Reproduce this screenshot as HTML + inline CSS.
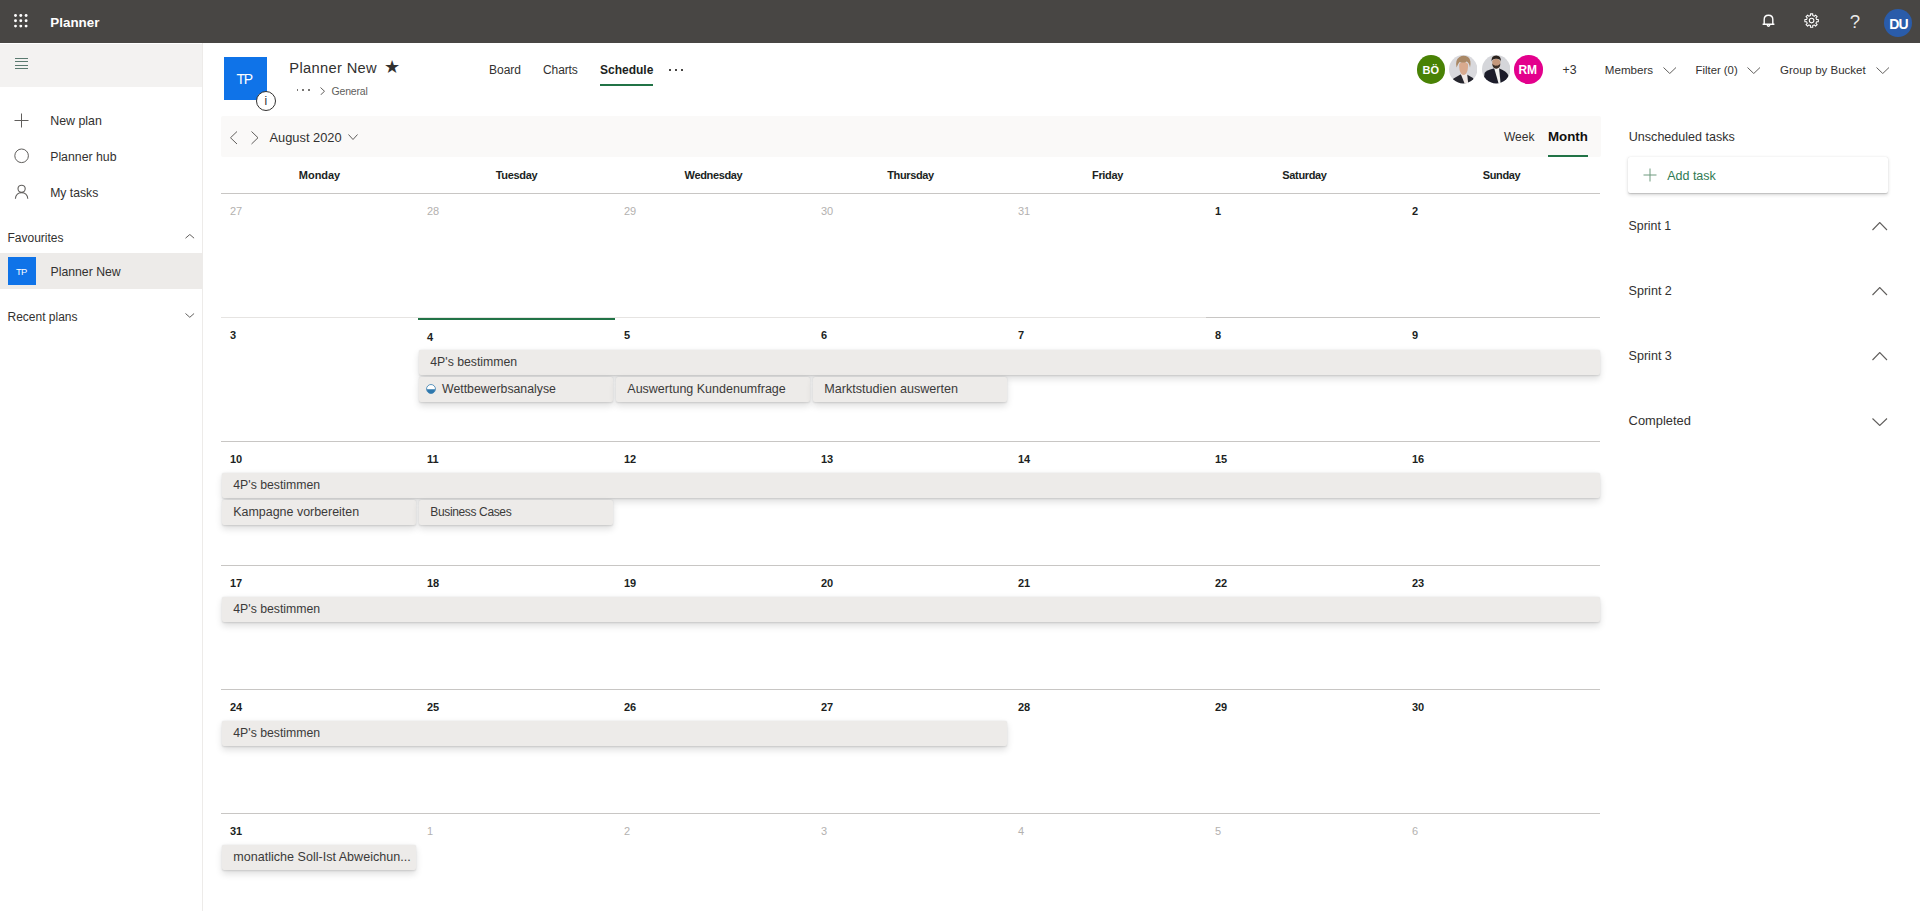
<!DOCTYPE html>
<html lang="en"><head><meta charset="utf-8"><title>Planner</title>
<style>
html,body{margin:0;padding:0}
body{width:1920px;height:911px;overflow:hidden;background:#fff;position:relative;font-family:"Liberation Sans",sans-serif;color:#323130}
.a{position:absolute}
.t{position:absolute;white-space:nowrap;line-height:1}
.bar{position:absolute;height:25px;background:#edebe9;border-radius:2px;box-shadow:0 3.2px 7.2px rgba(0,0,0,.13),0 .6px 1.8px rgba(0,0,0,.12)}
.ln{position:absolute;height:1px;background:#c8c6c4}
.av{position:absolute;border-radius:50%;overflow:hidden}
</style></head><body>

<div class="a" style="left:0;top:0;width:1920px;height:43px;background:#484644"></div>
<svg class="a" style="left:14px;top:14px" width="13.6" height="13.6" viewBox="0 0 13.6 13.6" fill="#fff"><circle cx="1.5" cy="1.5" r="1.45"/><circle cx="6.8" cy="1.5" r="1.45"/><circle cx="12.1" cy="1.5" r="1.45"/><circle cx="1.5" cy="6.8" r="1.45"/><circle cx="6.8" cy="6.8" r="1.45"/><circle cx="12.1" cy="6.8" r="1.45"/><circle cx="1.5" cy="12.1" r="1.45"/><circle cx="6.8" cy="12.1" r="1.45"/><circle cx="12.1" cy="12.1" r="1.45"/></svg>
<div class="t" style="left:50.3px;top:16.001px;font-size:13.4px;color:#fff;font-weight:700;">Planner</div>
<svg class="a" style="left:1761px;top:13.4px" width="15" height="15" viewBox="0 0 15 15" fill="none" stroke="#fff" stroke-width="1.4"><path d="M3.2 11.2 V6.6 C3.2 3.9 5 2.2 7.5 2.2 S11.8 3.9 11.8 6.6 V11.2 M1.6 11.2 H13.4"/><path d="M6.2 11.6 C6.2 12.6 6.8 13.2 7.5 13.2 S8.8 12.6 8.8 11.6"/></svg>
<svg class="a" style="left:1804.1px;top:13.2px" width="15.2" height="15.2" viewBox="0 0 16 16" fill="none" stroke="#fff" stroke-width="1.1" stroke-linejoin="round"><path d="M15.10 6.78 L15.10 9.22 L13.27 9.18 L12.56 10.89 L13.88 12.16 L12.16 13.88 L10.89 12.56 L9.18 13.27 L9.22 15.10 L6.78 15.10 L6.82 13.27 L5.11 12.56 L3.84 13.88 L2.12 12.16 L3.44 10.89 L2.73 9.18 L0.90 9.22 L0.90 6.78 L2.73 6.82 L3.44 5.11 L2.12 3.84 L3.84 2.12 L5.11 3.44 L6.82 2.73 L6.78 0.90 L9.22 0.90 L9.18 2.73 L10.89 3.44 L12.16 2.12 L13.88 3.84 L12.56 5.11 L13.27 6.82 Z"/><circle cx="8" cy="8" r="2.4"/></svg>
<div class="t" style="left:1849.8px;top:13.005px;font-size:18.6px;color:rgba(255,255,255,.9);">?</div>
<div class="av" style="left:1884px;top:9px;width:28px;height:28px;background:#2a5caa"></div>
<div class="t" style="left:1889.2px;top:17.008px;font-size:14px;color:#fff;font-weight:700;letter-spacing:-0.7px;">DU</div>
<div class="a" style="left:0;top:44px;width:202px;height:43px;background:#f3f2f1"></div>
<div class="a" style="left:202px;top:43px;width:1px;height:868px;background:#edebe9"></div>
<div class="a" style="left:15px;top:58px;width:13px;height:1px;background:#5a7a70"></div>
<div class="a" style="left:15px;top:61.4px;width:13px;height:1px;background:#5a7a70"></div>
<div class="a" style="left:15px;top:65px;width:13px;height:1px;background:#5a7a70"></div>
<div class="a" style="left:15px;top:68.4px;width:13px;height:1px;background:#5a7a70"></div>
<svg class="a" style="left:14px;top:113px" width="15" height="15" viewBox="0 0 15 15"><path d="M7.5 0.5V14.5M0.5 7.5H14.5" stroke="#605e5c" stroke-width="1"/></svg>
<div class="t" style="left:50.2px;top:115.003px;font-size:12.4px;color:#323130;">New plan</div>
<svg class="a" style="left:14px;top:148px" width="16" height="16" viewBox="0 0 16 16"><circle cx="7.6" cy="7.8" r="6.8" fill="none" stroke="#605e5c" stroke-width="1"/></svg>
<div class="t" style="left:50.2px;top:151.010px;font-size:12.3px;color:#323130;">Planner hub</div>
<svg class="a" style="left:14px;top:184px" width="16" height="16" viewBox="0 0 16 16" fill="none" stroke="#605e5c" stroke-width="1.1"><circle cx="7.6" cy="4.8" r="3.6"/><path d="M1.4 14.8 C1.6 10.8 4.4 8.6 7.6 8.6 S13.6 10.8 13.8 14.8"/></svg>
<div class="t" style="left:50.2px;top:187.001px;font-size:12.2px;color:#323130;">My tasks</div>
<div class="t" style="left:7.5px;top:232.014px;font-size:12px;color:#323130;">Favourites</div>
<svg class="a" style="left:185.2px;top:234.2px" width="9.600000000000023" height="4.700000000000017" viewBox="0 0 9.600000000000023 4.700000000000017"><path d="M0.5 4.20 L4.80 0.5 L9.10 4.20" fill="none" stroke="#605e5c" stroke-width="1"/></svg>
<div class="a" style="left:0;top:253px;width:202px;height:36px;background:#edebe9"></div>
<div class="a" style="left:8px;top:257px;width:28px;height:28px;background:#0f73e8"></div>
<div class="t" style="left:15.9px;top:267.012px;font-size:9.4px;color:#fff;letter-spacing:-0.6px;">TP</div>
<div class="t" style="left:50.5px;top:266.005px;font-size:12.25px;color:#323130;">Planner New</div>
<div class="t" style="left:7.5px;top:311.014px;font-size:12px;color:#323130;">Recent plans</div>
<svg class="a" style="left:185.2px;top:313.4px" width="9.600000000000023" height="4.800000000000011" viewBox="0 0 9.600000000000023 4.800000000000011"><path d="M0.5 0.5 L4.80 4.30 L9.10 0.5" fill="none" stroke="#605e5c" stroke-width="1"/></svg>
<div class="a" style="left:224px;top:57px;width:43px;height:43px;background:#0f73e8"></div>
<div class="t" style="left:236.6px;top:72.008px;font-size:14px;color:#fff;letter-spacing:-1.4px;">TP</div>
<div class="a" style="left:256px;top:91px;width:18px;height:18px;border:1px solid #323130;border-radius:50%;background:#fff"></div>
<div class="t" style="left:264.6px;top:95.014px;font-size:12px;color:#323130;">i</div>
<div class="t" style="left:289.3px;top:61.010px;font-size:14.7px;color:#323130;letter-spacing:0.33px;">Planner New</div>
<div class="t" style="left:384.3px;top:59.008px;font-size:17.6px;color:#323130;">&#9733;</div>
<div class="a" style="left:296.8px;top:89.2px;width:1.5px;height:1.5px;background:#797775"></div>
<div class="a" style="left:302.4px;top:89.2px;width:1.5px;height:1.5px;background:#797775"></div>
<div class="a" style="left:308.0px;top:89.2px;width:1.5px;height:1.5px;background:#797775"></div>
<svg class="a" style="left:320px;top:86.5px" width="5" height="8.5" viewBox="0 0 5 8.5"><path d="M0.5 0.5 L4.50 4.25 L0.5 8.00" fill="none" stroke="#605e5c" stroke-width="1"/></svg>
<div class="t" style="left:331.6px;top:86.002px;font-size:10.5px;color:#605e5c;letter-spacing:-0.2px;">General</div>
<div class="t" style="left:489px;top:64.014px;font-size:12px;color:#323130;">Board</div>
<div class="t" style="left:543px;top:64.014px;font-size:12px;color:#323130;letter-spacing:-0.1px;">Charts</div>
<div class="t" style="left:600px;top:64.014px;font-size:12px;color:#201f1e;font-weight:700;">Schedule</div>
<div class="a" style="left:600px;top:84px;width:53px;height:2px;background:#217346"></div>
<div class="a" style="left:669.0px;top:69px;width:1.7px;height:1.7px;background:#484644"></div>
<div class="a" style="left:675.0px;top:69px;width:1.7px;height:1.7px;background:#484644"></div>
<div class="a" style="left:681.0px;top:69px;width:1.7px;height:1.7px;background:#484644"></div>
<div class="av" style="left:1416.8px;top:55px;width:28.4px;height:28.6px;background:#498205"></div>
<div class="t" style="left:1422.6px;top:65.001px;font-size:11px;color:#fff;font-weight:700;">BÖ</div>
<svg class="a" style="left:1449px;top:55px" width="28.4" height="28.6" viewBox="0 0 28.4 28.6"><defs><clipPath id="c1"><circle cx="14.2" cy="14.3" r="14.2"/></clipPath><filter id="bl" x="-10%" y="-10%" width="120%" height="120%"><feGaussianBlur stdDeviation="0.45"/></filter></defs><g clip-path="url(#c1)"><rect width="28.4" height="28.6" fill="#d9d9dd"/><g filter="url(#bl)"><path d="M2 29 L4.5 23.5 L11.5 19.5 L17.5 19.2 L24 23 L27 29Z" fill="#26262e"/><path d="M11.8 19 L15.6 28.6 L19.2 28.6 L18.2 19Z" fill="#f1e9e6"/><path d="M10.2 9 Q9.8 16 12.4 19 Q14.6 21 16.8 19 Q19.4 16 19 9 Q14.6 4 10.2 9Z" fill="#d9aa8e"/><path d="M7.6 12.5 Q5.8 5 10.5 2 Q14.5 -0.5 19 2 Q22.8 5 21 12.5 Q20.4 8 17.8 6.4 Q14 8.4 10.6 7 Q8.6 9 7.6 12.5Z" fill="#a98866"/></g></g></svg>
<svg class="a" style="left:1481.7px;top:55px" width="28.4" height="28.6" viewBox="0 0 28.4 28.6"><defs><clipPath id="c2"><circle cx="14.2" cy="14.3" r="14.2"/></clipPath></defs><g clip-path="url(#c2)"><rect width="28.4" height="28.6" fill="#d5d6da"/><g filter="url(#bl)"><path d="M1 29 L2.6 18 Q4 15.5 11.6 13.6 L17.4 13.6 Q24.6 16.4 26.2 20 L27.6 29Z" fill="#1d1f29"/><path d="M12 12.6 L17 12.6 L18.6 28.6 L16.6 28.6Z" fill="#f2f2f2"/><path d="M10.2 6 Q10 13.4 14.2 13.6 Q18.4 13.4 18.4 6 Q14.2 1.5 10.2 6Z" fill="#c4977a"/><path d="M10.3 8.6 Q10.4 13.6 14.2 13.8 Q18.2 13.6 18.4 8.6 Q17 11 14.3 10.6 Q11.6 11 10.3 8.6Z" fill="#3b2e27"/><path d="M9.6 6.6 Q9 0.6 14.2 0.6 Q19.4 0.6 18.9 6.6 Q18 3.6 14.2 3.8 Q10.4 3.6 9.6 6.6Z" fill="#2a221e"/></g></g></svg>
<div class="av" style="left:1514.3px;top:55px;width:28.4px;height:28.6px;background:#e3008c"></div>
<div class="t" style="left:1518.4px;top:64.014px;font-size:12px;color:#fff;font-weight:700;">RM</div>
<div class="t" style="left:1562.5px;top:64.010px;font-size:12.3px;color:#323130;">+3</div>
<div class="t" style="left:1604.8px;top:64.009px;font-size:11.6px;color:#323130;">Members</div>
<svg class="a" style="left:1662.5px;top:67px" width="13.5" height="7" viewBox="0 0 13.5 7"><path d="M0.5 0.5 L6.75 6.50 L13.00 0.5" fill="none" stroke="#605e5c" stroke-width="1"/></svg>
<div class="t" style="left:1695.6px;top:65.013px;font-size:11.3px;color:#323130;">Filter (0)</div>
<svg class="a" style="left:1747px;top:67px" width="13.5" height="7" viewBox="0 0 13.5 7"><path d="M0.5 0.5 L6.75 6.50 L13.00 0.5" fill="none" stroke="#605e5c" stroke-width="1"/></svg>
<div class="t" style="left:1780px;top:65.015px;font-size:11.5px;color:#323130;">Group by Bucket</div>
<svg class="a" style="left:1875.5px;top:67px" width="13.5" height="7" viewBox="0 0 13.5 7"><path d="M0.5 0.5 L6.75 6.50 L13.00 0.5" fill="none" stroke="#605e5c" stroke-width="1"/></svg>
<div class="a" style="left:221px;top:116px;width:1380px;height:41px;background:#faf9f8;border-radius:2px"></div>
<svg class="a" style="left:230px;top:131px" width="7.5" height="13.5" viewBox="0 0 7.5 13.5"><path d="M7.00 0.5 L0.5 6.75 L7.00 13.00" fill="none" stroke="#605e5c" stroke-width="1"/></svg>
<svg class="a" style="left:251px;top:131px" width="7.5" height="13.5" viewBox="0 0 7.5 13.5"><path d="M0.5 0.5 L7.00 6.75 L0.5 13.00" fill="none" stroke="#605e5c" stroke-width="1"/></svg>
<div class="t" style="left:269.5px;top:132.013px;font-size:12.85px;color:#323130;">August 2020</div>
<svg class="a" style="left:348px;top:133.5px" width="10" height="6.0" viewBox="0 0 10 6.0"><path d="M0.5 0.5 L5.00 5.50 L9.50 0.5" fill="none" stroke="#605e5c" stroke-width="1"/></svg>
<div class="t" style="left:1504px;top:131.014px;font-size:12px;color:#323130;">Week</div>
<div class="t" style="left:1548px;top:130.007px;font-size:13.3px;color:#11100f;font-weight:700;">Month</div>
<div class="a" style="left:1548px;top:155px;width:40px;height:2px;background:#217346"></div>
<div class="t" style="left:221px;top:170.001px;font-size:11px;color:#201f1e;font-weight:700;letter-spacing:-0.05px;width:197px;text-align:center;">Monday</div>
<div class="t" style="left:418px;top:170.001px;font-size:11px;color:#201f1e;font-weight:700;letter-spacing:-0.35px;width:197px;text-align:center;">Tuesday</div>
<div class="t" style="left:615px;top:170.001px;font-size:11px;color:#201f1e;font-weight:700;letter-spacing:-0.35px;width:197px;text-align:center;">Wednesday</div>
<div class="t" style="left:812px;top:170.001px;font-size:11px;color:#201f1e;font-weight:700;letter-spacing:-0.35px;width:197px;text-align:center;">Thursday</div>
<div class="t" style="left:1009px;top:170.001px;font-size:11px;color:#201f1e;font-weight:700;letter-spacing:-0.35px;width:197px;text-align:center;">Friday</div>
<div class="t" style="left:1206px;top:170.001px;font-size:11px;color:#201f1e;font-weight:700;letter-spacing:-0.35px;width:197px;text-align:center;">Saturday</div>
<div class="t" style="left:1403px;top:170.001px;font-size:11px;color:#201f1e;font-weight:700;letter-spacing:-0.35px;width:197px;text-align:center;">Sunday</div>
<div class="ln" style="left:221px;top:193px;width:1379px"></div>
<div class="ln" style="left:221px;top:317px;width:985px;background:#e6e4e2"></div>
<div class="ln" style="left:1206px;top:317px;width:394px"></div>
<div class="ln" style="left:221px;top:441px;width:1379px"></div>
<div class="ln" style="left:221px;top:565px;width:1379px"></div>
<div class="ln" style="left:221px;top:689px;width:1379px"></div>
<div class="ln" style="left:221px;top:813px;width:1379px"></div>
<div class="a" style="left:418px;top:318px;width:197px;height:2px;background:#217346"></div>
<div class="t" style="left:230px;top:206.001px;font-size:11px;color:#b3b1af;">27</div>
<div class="t" style="left:427px;top:206.001px;font-size:11px;color:#b3b1af;">28</div>
<div class="t" style="left:624px;top:206.001px;font-size:11px;color:#b3b1af;">29</div>
<div class="t" style="left:821px;top:206.001px;font-size:11px;color:#b3b1af;">30</div>
<div class="t" style="left:1018px;top:206.001px;font-size:11px;color:#b3b1af;">31</div>
<div class="t" style="left:1215px;top:206.001px;font-size:11px;color:#201f1e;font-weight:700;">1</div>
<div class="t" style="left:1412px;top:206.001px;font-size:11px;color:#201f1e;font-weight:700;">2</div>
<div class="t" style="left:230px;top:330.001px;font-size:11px;color:#201f1e;font-weight:700;">3</div>
<div class="t" style="left:427px;top:332.001px;font-size:11px;color:#201f1e;font-weight:700;">4</div>
<div class="t" style="left:624px;top:330.001px;font-size:11px;color:#201f1e;font-weight:700;">5</div>
<div class="t" style="left:821px;top:330.001px;font-size:11px;color:#201f1e;font-weight:700;">6</div>
<div class="t" style="left:1018px;top:330.001px;font-size:11px;color:#201f1e;font-weight:700;">7</div>
<div class="t" style="left:1215px;top:330.001px;font-size:11px;color:#201f1e;font-weight:700;">8</div>
<div class="t" style="left:1412px;top:330.001px;font-size:11px;color:#201f1e;font-weight:700;">9</div>
<div class="t" style="left:230px;top:454.001px;font-size:11px;color:#201f1e;font-weight:700;">10</div>
<div class="t" style="left:427px;top:454.001px;font-size:11px;color:#201f1e;font-weight:700;">11</div>
<div class="t" style="left:624px;top:454.001px;font-size:11px;color:#201f1e;font-weight:700;">12</div>
<div class="t" style="left:821px;top:454.001px;font-size:11px;color:#201f1e;font-weight:700;">13</div>
<div class="t" style="left:1018px;top:454.001px;font-size:11px;color:#201f1e;font-weight:700;">14</div>
<div class="t" style="left:1215px;top:454.001px;font-size:11px;color:#201f1e;font-weight:700;">15</div>
<div class="t" style="left:1412px;top:454.001px;font-size:11px;color:#201f1e;font-weight:700;">16</div>
<div class="t" style="left:230px;top:578.001px;font-size:11px;color:#201f1e;font-weight:700;">17</div>
<div class="t" style="left:427px;top:578.001px;font-size:11px;color:#201f1e;font-weight:700;">18</div>
<div class="t" style="left:624px;top:578.001px;font-size:11px;color:#201f1e;font-weight:700;">19</div>
<div class="t" style="left:821px;top:578.001px;font-size:11px;color:#201f1e;font-weight:700;">20</div>
<div class="t" style="left:1018px;top:578.001px;font-size:11px;color:#201f1e;font-weight:700;">21</div>
<div class="t" style="left:1215px;top:578.001px;font-size:11px;color:#201f1e;font-weight:700;">22</div>
<div class="t" style="left:1412px;top:578.001px;font-size:11px;color:#201f1e;font-weight:700;">23</div>
<div class="t" style="left:230px;top:702.001px;font-size:11px;color:#201f1e;font-weight:700;">24</div>
<div class="t" style="left:427px;top:702.001px;font-size:11px;color:#201f1e;font-weight:700;">25</div>
<div class="t" style="left:624px;top:702.001px;font-size:11px;color:#201f1e;font-weight:700;">26</div>
<div class="t" style="left:821px;top:702.001px;font-size:11px;color:#201f1e;font-weight:700;">27</div>
<div class="t" style="left:1018px;top:702.001px;font-size:11px;color:#201f1e;font-weight:700;">28</div>
<div class="t" style="left:1215px;top:702.001px;font-size:11px;color:#201f1e;font-weight:700;">29</div>
<div class="t" style="left:1412px;top:702.001px;font-size:11px;color:#201f1e;font-weight:700;">30</div>
<div class="t" style="left:230px;top:826.001px;font-size:11px;color:#201f1e;font-weight:700;">31</div>
<div class="t" style="left:427px;top:826.001px;font-size:11px;color:#b3b1af;">1</div>
<div class="t" style="left:624px;top:826.001px;font-size:11px;color:#b3b1af;">2</div>
<div class="t" style="left:821px;top:826.001px;font-size:11px;color:#b3b1af;">3</div>
<div class="t" style="left:1018px;top:826.001px;font-size:11px;color:#b3b1af;">4</div>
<div class="t" style="left:1215px;top:826.001px;font-size:11px;color:#b3b1af;">5</div>
<div class="t" style="left:1412px;top:826.001px;font-size:11px;color:#b3b1af;">6</div>
<div class="bar" style="left:419px;top:350px;width:1181px"></div>
<div class="t" style="left:430.3px;top:356.004px;font-size:12.27px;color:#3b3a39;">4P's bestimmen</div>
<div class="bar" style="left:419px;top:377px;width:193.60000000000002px"></div>
<svg class="a" style="left:426px;top:383.5px" width="10" height="10" viewBox="0 0 11 11"><circle cx="5.5" cy="5.5" r="4.9" fill="#fff" stroke="#3b7fb0" stroke-width="0.9"/><path d="M0.9 5.9 A4.6 4.6 0 0 0 10.1 5.9Z" fill="#2f78ad"/></svg>
<div class="t" style="left:442px;top:383.010px;font-size:12.3px;color:#3b3a39;">Wettbewerbsanalyse</div>
<div class="bar" style="left:616px;top:377px;width:193.60000000000002px"></div>
<div class="t" style="left:627.3px;top:383.012px;font-size:12.5px;color:#3b3a39;">Auswertung Kundenumfrage</div>
<div class="bar" style="left:813px;top:377px;width:193.60000000000002px"></div>
<div class="t" style="left:824.3px;top:383.006px;font-size:12.6px;color:#3b3a39;">Marktstudien auswerten</div>
<div class="bar" style="left:222px;top:473px;width:1378px"></div>
<div class="t" style="left:233.3px;top:479.004px;font-size:12.27px;color:#3b3a39;">4P's bestimmen</div>
<div class="bar" style="left:222px;top:500px;width:193.60000000000002px"></div>
<div class="t" style="left:233.3px;top:506.008px;font-size:12.45px;color:#3b3a39;">Kampagne vorbereiten</div>
<div class="bar" style="left:419px;top:500px;width:193.60000000000002px"></div>
<div class="t" style="left:430.3px;top:506.014px;font-size:12px;color:#3b3a39;letter-spacing:-0.36px;">Business Cases</div>
<div class="bar" style="left:222px;top:597px;width:1378px"></div>
<div class="t" style="left:233.3px;top:603.004px;font-size:12.27px;color:#3b3a39;">4P's bestimmen</div>
<div class="bar" style="left:222px;top:721px;width:784.6px"></div>
<div class="t" style="left:233.3px;top:727.004px;font-size:12.27px;color:#3b3a39;">4P's bestimmen</div>
<div class="bar" style="left:222px;top:845px;width:193.60000000000002px"></div>
<div class="t" style="left:233.3px;top:851.016px;font-size:12.57px;color:#3b3a39;">monatliche Soll-Ist Abweichun...</div>
<div class="t" style="left:1628.8px;top:131.001px;font-size:12.55px;color:#323130;">Unscheduled tasks</div>
<div class="a" style="left:1628px;top:157px;width:260px;height:36px;background:#fff;border-radius:2px;box-shadow:0 1.6px 3.6px rgba(0,0,0,.16),0 .3px .9px rgba(0,0,0,.13)"></div>
<svg class="a" style="left:1643px;top:168px" width="14" height="14" viewBox="0 0 14 14"><path d="M7 0.5V13.5M0.5 7H13.5" stroke="#6f9a7f" stroke-width="1"/></svg>
<div class="t" style="left:1667.2px;top:170.012px;font-size:12.5px;color:#2f7a53;">Add task</div>
<div class="t" style="left:1628.6px;top:220.006px;font-size:12.36px;color:#323130;">Sprint 1</div>
<svg class="a" style="left:1872px;top:222px" width="15.5" height="8.5" viewBox="0 0 15.5 8.5"><path d="M0.5 8.00 L7.75 0.5 L15.00 8.00" fill="none" stroke="#605e5c" stroke-width="1.1"/></svg>
<div class="t" style="left:1628.6px;top:285.001px;font-size:12.55px;color:#323130;">Sprint 2</div>
<svg class="a" style="left:1872px;top:287px" width="15.5" height="8.5" viewBox="0 0 15.5 8.5"><path d="M0.5 8.00 L7.75 0.5 L15.00 8.00" fill="none" stroke="#605e5c" stroke-width="1.1"/></svg>
<div class="t" style="left:1628.6px;top:350.001px;font-size:12.55px;color:#323130;">Sprint 3</div>
<svg class="a" style="left:1872px;top:352px" width="15.5" height="8.5" viewBox="0 0 15.5 8.5"><path d="M0.5 8.00 L7.75 0.5 L15.00 8.00" fill="none" stroke="#605e5c" stroke-width="1.1"/></svg>
<div class="t" style="left:1628.6px;top:415.003px;font-size:12.88px;color:#323130;">Completed</div>
<svg class="a" style="left:1872px;top:418px" width="15.5" height="8" viewBox="0 0 15.5 8"><path d="M0.5 0.5 L7.75 7.50 L15.00 0.5" fill="none" stroke="#605e5c" stroke-width="1.1"/></svg>
</body></html>
